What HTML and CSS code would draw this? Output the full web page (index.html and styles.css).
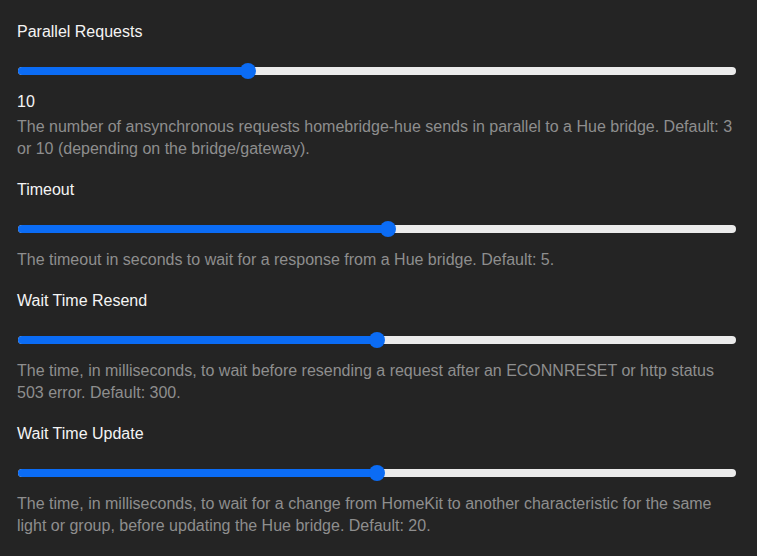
FILE: index.html
```html
<!DOCTYPE html>
<html lang="en">
<head>
  <meta charset="UTF-8" />
  <meta name="viewport" content="width=device-width, initial-scale=1.0"/>
  <title>Hue Settings</title>
  <link rel="stylesheet" href="styles.css">
</head>
<body>
  <div class="settings">
    <div class="field">
      <label class="field-label">Parallel Requests</label>
      <div class="slider">
        <div class="slider-fill" style="width: 32%"></div>
        <div class="slider-thumb" style="left: 32%"></div>
      </div>
      <div class="field-value">10</div>
      <p class="field-help">The number of ansynchronous requests homebridge-hue sends in parallel to a Hue bridge. Default: 3 or 10 (depending on the bridge/gateway).</p>
    </div>

    <div class="field">
      <label class="field-label">Timeout</label>
      <div class="slider">
        <div class="slider-fill" style="width: 51.5%"></div>
        <div class="slider-thumb" style="left: 51.5%"></div>
      </div>
      <p class="field-help">The timeout in seconds to wait for a response from a Hue bridge. Default: 5.</p>
    </div>

    <div class="field">
      <label class="field-label">Wait Time Resend</label>
      <div class="slider">
        <div class="slider-fill" style="width: 50%"></div>
        <div class="slider-thumb" style="left: 50%"></div>
      </div>
      <p class="field-help">The time, in milliseconds, to wait before resending a request after an ECONNRESET or http status 503 error. Default: 300.</p>
    </div>

    <div class="field">
      <label class="field-label">Wait Time Update</label>
      <div class="slider">
        <div class="slider-fill" style="width: 50%"></div>
        <div class="slider-thumb" style="left: 50%"></div>
      </div>
      <p class="field-help">The time, in milliseconds, to wait for a change from HomeKit to another characteristic for the same light or group, before updating the Hue bridge. Default: 20.</p>
    </div>
  </div>
</body>
</html>
```

FILE: styles.css
```css
* {
  margin: 0;
  padding: 0;
  box-sizing: border-box;
  font-family: 'Liberation Sans', Arial, sans-serif;
}

body {
  background: #242424;
  color: #f2f2f2;
}

.settings {
  padding: 21px 21px 0 17px;
}

.field {
  margin-bottom: 19px;
}

.field-label {
  display: block;
  font-size: 16px;
  line-height: 22px;
  color: #f4f4f4;
}

.slider {
  position: relative;
  height: 8px;
  margin: 24px 0 16px 1px;
  background: #ebebeb;
  border-radius: 4px;
}

.slider-fill {
  height: 100%;
  background: #0b6cf5;
  border-radius: 4px 0 0 4px;
}

.slider-thumb {
  position: absolute;
  top: 50%;
  width: 16px;
  height: 16px;
  margin: -8px 0 0 -8px;
  background: #0b6cf5;
  border-radius: 50%;
}

.field-value {
  font-size: 16px;
  line-height: 22px;
  color: #f4f4f4;
  margin-bottom: 3px;
}

.field-help {
  font-size: 16px;
  line-height: 22px;
  color: #8e8e8e;
}
```
